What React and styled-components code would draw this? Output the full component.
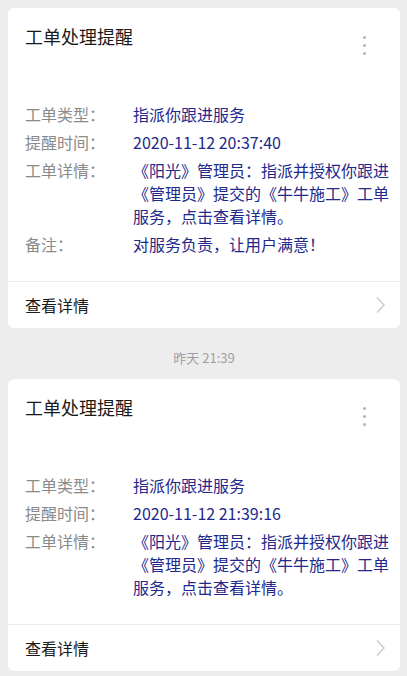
import React from 'react';
import styled, { createGlobalStyle } from 'styled-components';

const GlobalStyle = createGlobalStyle`
  html, body {
    margin: 0;
    padding: 0;
    background: #ededed;
  }
  body {
    font-family: "Noto Sans CJK SC", sans-serif;
    -webkit-font-smoothing: antialiased;
  }
`;

const Page = styled.div`
  padding: 8px 7px 8px 8px;
  display: flex;
  flex-direction: column;
`;

const Card = styled.div`
  background: #fff;
  border-radius: 6px;
  display: flex;
  flex-direction: column;
`;

const Header = styled.div`
  display: flex;
  justify-content: space-between;
  align-items: flex-start;
  padding: 16px 0 0 17px;
`;

const Title = styled.div`
  font-size: 18px;
  line-height: 24px;
  color: #1a1a1a;
`;

const MoreBtn = styled.div`
  width: 20px;
  margin-right: 26px;
  padding-top: 12px;
  display: flex;
  flex-direction: column;
  align-items: center;
  gap: 5px;

  span {
    width: 3px;
    height: 3px;
    border-radius: 50%;
    background: #b4b4b4;
  }
`;

const Rows = styled.div`
  display: flex;
  flex-direction: column;
  gap: 5px;
  padding: 48px 10px 25px 17px;
  border-bottom: 1px solid #ececec;
`;

const Row = styled.div`
  display: flex;
  font-size: 16px;
  line-height: 23px;
`;

const Label = styled.div`
  width: 108px;
  flex-shrink: 0;
  color: #8a8a8a;
`;

const Value = styled.div`
  flex: 1;
  color: #22288c;
`;

const Footer = styled.div`
  height: 46px;
  display: flex;
  align-items: center;
  justify-content: space-between;
  padding: 0 14px 0 17px;
  font-size: 16px;
  line-height: 23px;
  color: #1a1a1a;
`;

const Stamp = styled.div`
  padding: 22px 0 13px;
  text-align: center;
  font-size: 13px;
  line-height: 16px;
  color: #9e9e9e;
`;

const Chevron = () => (
  <svg width="11" height="18" viewBox="0 0 11 18">
    <path d="M2 1.5 L9 9 L2 16.5" fill="none" stroke="#cdcdcd" strokeWidth="1.5" />
  </svg>
);

const messages = [
  {
    time: '2020-11-12 20:37:40',
    note: '对服务负责，让用户满意！',
  },
  {
    stamp: '昨天 21:39',
    time: '2020-11-12 21:39:16',
  },
];

function NoticeCard({ msg }) {
  return (
    <Card>
      <Header>
        <Title>工单处理提醒</Title>
        <MoreBtn>
          <span />
          <span />
          <span />
        </MoreBtn>
      </Header>
      <Rows>
        <Row>
          <Label>工单类型：</Label>
          <Value>指派你跟进服务</Value>
        </Row>
        <Row>
          <Label>提醒时间：</Label>
          <Value>{msg.time}</Value>
        </Row>
        <Row>
          <Label>工单详情：</Label>
          <Value>《阳光》管理员：指派并授权你跟进《管理员》提交的《牛牛施工》工单服务，点击查看详情。</Value>
        </Row>
        {msg.note && (
          <Row>
            <Label>备注：</Label>
            <Value>{msg.note}</Value>
          </Row>
        )}
      </Rows>
      <Footer>
        <span>查看详情</span>
        <Chevron />
      </Footer>
    </Card>
  );
}

export default function App() {
  return (
    <Page>
      <GlobalStyle />
      {messages.map((m, i) => (
        <React.Fragment key={i}>
          {m.stamp && <Stamp>{m.stamp}</Stamp>}
          <NoticeCard msg={m} />
        </React.Fragment>
      ))}
    </Page>
  );
}
